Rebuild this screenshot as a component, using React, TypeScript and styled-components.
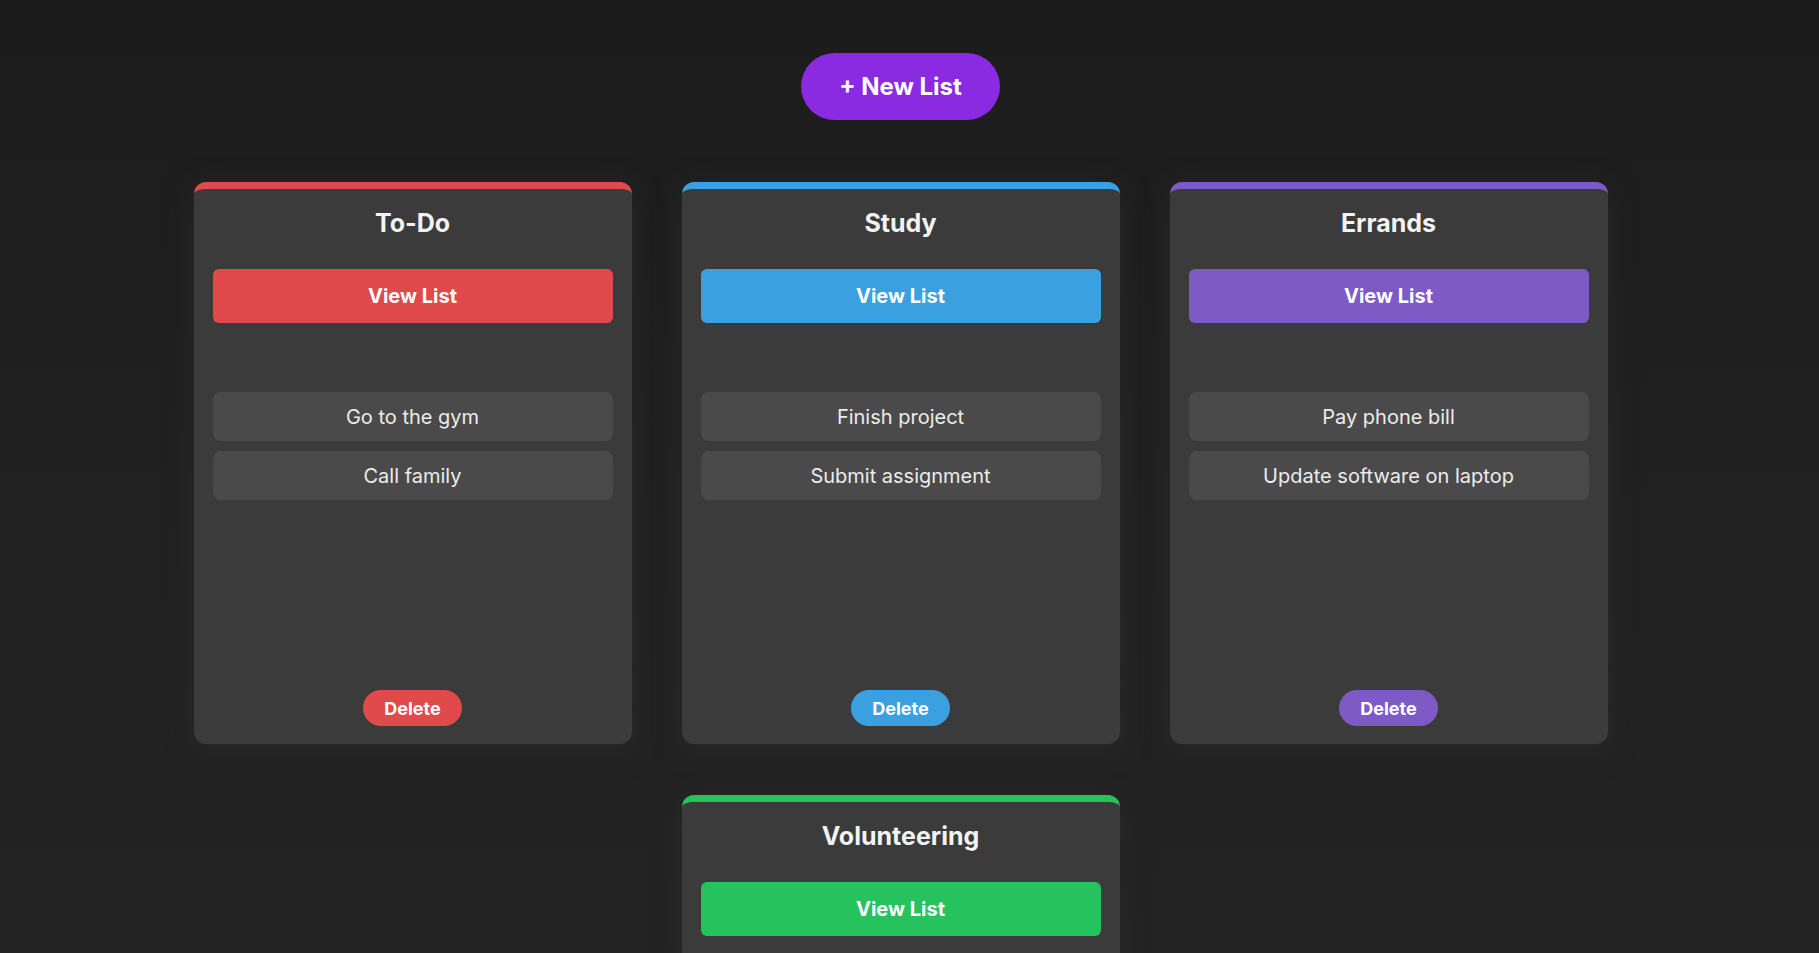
import React from "react";
import styled, { createGlobalStyle } from "styled-components";

type List = {
  id: number;
  title: string;
  color: string;
  items: string[];
};

const lists: List[] = [
  { id: 1, title: "To-Do", color: "#e04a4a", items: ["Go to the gym", "Call family"] },
  { id: 2, title: "Study", color: "#3ba0e0", items: ["Finish project", "Submit assignment"] },
  { id: 3, title: "Errands", color: "#7e5ac6", items: ["Pay phone bill", "Update software on laptop"] },
  { id: 4, title: "Volunteering", color: "#26c25e", items: ["Sign up for food drive"] },
];

const App: React.FC = () => {
  return (
    <Page>
      <GlobalStyle />
      <NewListButton>+ New List</NewListButton>
      <Board>
        {lists.map((list) => (
          <Card key={list.id} $accent={list.color}>
            <Title>{list.title}</Title>
            <ViewButton $accent={list.color}>View List</ViewButton>
            <Items>
              {list.items.map((item) => (
                <Item key={item}>{item}</Item>
              ))}
            </Items>
            <DeleteButton $accent={list.color}>Delete</DeleteButton>
          </Card>
        ))}
      </Board>
    </Page>
  );
};

export default App;

const GlobalStyle = createGlobalStyle`
  html, body {
    margin: 0;
    padding: 0;
  }
  body {
    font-family: Inter, "Noto Sans", "Liberation Sans", sans-serif;
    background: linear-gradient(180deg, #1c1c1c 0%, #212121 55%, #232323 100%);
    background-attachment: fixed;
    color: #f1f1f1;
    min-height: 100vh;
  }
  * {
    box-sizing: border-box;
  }
`;

// right padding stands in for the scrollbar gutter of the original page
const Page = styled.div`
  display: flex;
  flex-direction: column;
  align-items: center;
  padding: 53px 18px 60px 0;
`;

const NewListButton = styled.button`
  font-family: Inter, "Liberation Sans", sans-serif;
  font-size: 24px;
  font-weight: 700;
  color: #ffffff;
  background-color: #8a2be2;
  border: none;
  border-radius: 34px;
  height: 67px;
  padding: 0 38px;
  cursor: pointer;
  margin-bottom: 62px;
`;

const Board = styled.div`
  display: flex;
  flex-wrap: wrap;
  justify-content: center;
  gap: 51px 50px;
  width: 1420px;
`;

const Card = styled.div<{ $accent: string }>`
  width: 438px;
  height: 562px;
  display: flex;
  flex-direction: column;
  align-items: stretch;
  background-color: #3b3b3b;
  border-top: 7px solid ${(p) => p.$accent};
  border-radius: 12px;
  padding: 19px 19px 18px;
  box-shadow: 0 6px 28px rgba(48, 48, 48, 0.55);
`;

const Title = styled.h2`
  margin: 0;
  text-align: center;
  font-size: 25px;
  line-height: 31px;
  font-weight: 700;
  color: #f3f3f3;
`;

const ViewButton = styled.button<{ $accent: string }>`
  margin-top: 30px;
  height: 54px;
  border: none;
  border-radius: 6px;
  background-color: ${(p) => p.$accent};
  color: #ffffff;
  font-family: Inter, "Liberation Sans", sans-serif;
  font-size: 20px;
  font-weight: 700;
  cursor: pointer;
`;

const Items = styled.ul`
  list-style: none;
  margin: 69px 0 0;
  padding: 0;
  display: flex;
  flex-direction: column;
  gap: 10px;
`;

const Item = styled.li`
  background-color: #4a4a4a;
  border-radius: 8px;
  height: 49px;
  display: flex;
  align-items: center;
  justify-content: center;
  font-size: 20px;
  color: #ececec;
`;

const DeleteButton = styled.button<{ $accent: string }>`
  margin-top: auto;
  align-self: center;
  height: 36px;
  padding: 0 21px;
  border: none;
  border-radius: 18px;
  background-color: ${(p) => p.$accent};
  color: #ffffff;
  font-family: Inter, "Liberation Sans", sans-serif;
  font-size: 18px;
  font-weight: 700;
  cursor: pointer;
`;
